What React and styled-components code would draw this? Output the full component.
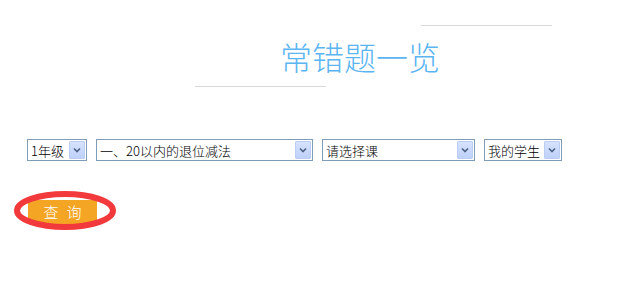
import React from "react";
import styled, { createGlobalStyle } from "styled-components";

const GlobalStyle = createGlobalStyle`
  body {
    margin: 0;
    background: #ffffff;
    font-family: "Noto Sans CJK SC", "Liberation Sans", sans-serif;
  }
`;

const Page = styled.div`
  width: 617px;
  height: 288px;
  padding-top: 25px;
  box-sizing: border-box;
`;

const Header = styled.div`
  display: flex;
  flex-direction: column;
`;

const Rule = styled.div`
  height: 1px;
  width: 131px;
  background: #d9d9d9;
  margin-left: ${(p) => p.$left}px;
  margin-top: ${(p) => p.$top || 0}px;
`;

const Title = styled.h1`
  margin: 10px 0 0 280px;
  font-size: 32px;
  line-height: 40px;
  font-weight: 200;
  color: #5cb5f2;
`;

const FilterRow = styled.div`
  display: flex;
  gap: 9px;
  margin: 52px 0 0 27px;
`;

const SelectBox = styled.div`
  display: flex;
  align-items: center;
  justify-content: space-between;
  width: ${(p) => p.$width}px;
  height: 22px;
  box-sizing: border-box;
  border: 1px solid #7f9db9;
  background: #fff;
  padding: 0 1px 0 3px;
  font-size: 13px;
  font-weight: 300;
  color: #000;
  white-space: nowrap;
`;

const Arrow = styled.div`
  width: 16px;
  height: 18px;
  box-sizing: border-box;
  border: 1px solid #bccdf4;
  border-radius: 1px;
  background: linear-gradient(180deg, #d6e2fd 0%, #bfd1fa 100%);
  display: flex;
  align-items: center;
  justify-content: center;
`;

const QueryArea = styled.div`
  position: relative;
  margin: 38px 0 0 28px;
  width: 69px;
  height: 24px;
`;

const QueryButton = styled.button`
  width: 69px;
  height: 24px;
  border: none;
  background: #f4a524;
  color: #fff;
  font-family: "Noto Sans CJK SC", sans-serif;
  font-size: 15px;
  font-weight: 300;
  letter-spacing: 8px;
  padding: 0 0 0 8px;
  line-height: 24px;
  cursor: pointer;
`;

const Mark = styled.svg`
  position: absolute;
  left: -14px;
  top: -8px;
  pointer-events: none;
`;

const Chevron = () => (
  <svg width="8" height="6" viewBox="0 0 8 6">
    <path d="M1 1.5 L4 4.5 L7 1.5" fill="none" stroke="#4d6185" strokeWidth="1.6" />
  </svg>
);

const Select = ({ width, children }) => (
  <SelectBox $width={width}>
    <span>{children}</span>
    <Arrow>
      <Chevron />
    </Arrow>
  </SelectBox>
);

export default function App() {
  return (
    <Page>
      <GlobalStyle />
      <Header>
        <Rule $left={421} />
        <Title>常错题一览</Title>
        <Rule $left={195} $top={10} />
      </Header>
      <FilterRow>
        <Select width={60}>1年级</Select>
        <Select width={217}>一、20以内的退位减法</Select>
        <Select width={153}>请选择课</Select>
        <Select width={78}>我的学生</Select>
      </FilterRow>
      <QueryArea>
        <QueryButton>查询</QueryButton>
        <Mark width="104" height="40" viewBox="0 0 104 40">
          <ellipse cx="51" cy="19.5" rx="48" ry="16.5" fill="none" stroke="#f23a3c" strokeWidth="6" />
        </Mark>
      </QueryArea>
    </Page>
  );
}
